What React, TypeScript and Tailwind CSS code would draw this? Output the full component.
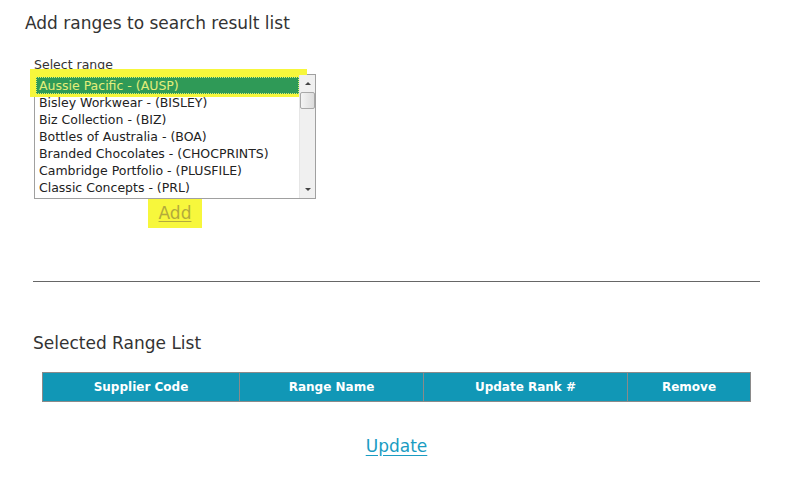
import React from "react";

const items = [
  "Aussie Pacific - (AUSP)",
  "Bisley Workwear - (BISLEY)",
  "Biz Collection - (BIZ)",
  "Bottles of Australia - (BOA)",
  "Branded Chocolates - (CHOCPRINTS)",
  "Cambridge Portfolio - (PLUSFILE)",
  "Classic Concepts - (PRL)",
];

const font = { fontFamily: '"DejaVu Sans", "Liberation Sans", sans-serif' };

export default function App() {
  return (
    <div className="w-[790px] h-[492px] bg-white text-[#333]" style={font}>
      <div className="pl-[25px] pt-[12px] text-[17px] leading-[22px] text-[#333]">
        Add ranges to search result list
      </div>
      <div className="ml-[34px] mt-[24px] w-[282px] flex flex-col">
        <div className="text-[12.5px] leading-[14px] text-[#333]">Select range</div>
        <div className="relative mt-[2px] h-[125px] w-[282px] border border-[#a0a0a0] bg-white flex">
          <div className="absolute left-[-5px] top-[-6px] w-[277px] h-[28px] bg-[#f7f73c]" />
          <div className="relative flex-1 pt-[2px] pl-[1px] overflow-hidden">
            {items.map((t, i) => (
              <div
                key={t}
                className={
                  i === 0
                    ? "h-[17px] leading-[16px] pl-[2px] text-[12.5px] bg-[#2f9a57] text-[#e4ee7a] border border-dotted border-[#d8ef70] whitespace-nowrap"
                    : "h-[17px] leading-[17px] pl-[3px] text-[12.5px] text-[#222] whitespace-nowrap"
                }
              >
                {t}
              </div>
            ))}
          </div>
          <div className="relative w-[16px] h-full bg-[#f0f0f0] border-l border-[#e6e6e6] flex flex-col items-center">
            <div className="h-[17px] w-full flex items-center justify-center">
              <div className="w-0 h-0 border-l-[3px] border-r-[3px] border-b-[3px] border-l-transparent border-r-transparent border-b-[#444]" />
            </div>
            <div className="w-[15px] h-[17px] rounded-[2px] border border-[#a8a8a8] bg-gradient-to-r from-[#f4f4f4] to-[#dcdcdc]" />
            <div className="flex-1" />
            <div className="h-[17px] w-full flex items-center justify-center">
              <div className="w-0 h-0 border-l-[3px] border-r-[3px] border-t-[3px] border-l-transparent border-r-transparent border-t-[#444]" />
            </div>
          </div>
        </div>
        <div className="flex justify-center">
          <div className="bg-[#f7f73c] w-[54px] h-[31px] mt-[-2px] flex items-center justify-center">
            <span className="text-[17px] leading-[20px] text-[#b3ab3b] underline underline-offset-[2px]">Add</span>
          </div>
        </div>
      </div>
      <div className="ml-[33px] mt-[53px] w-[727px] h-px bg-[#666]" />
      <div className="pl-[33px] mt-[50px] text-[17px] leading-[22px] text-[#333]">Selected Range List</div>
      <div className="ml-[42px] mt-[18px] w-[709px] h-[30px] bg-[#1197b6] border border-[#8a8a8a] flex text-white text-[12px] font-bold">
        <div className="w-[197px] flex items-center justify-center border-r border-[#8a8a8a]">Supplier Code</div>
        <div className="w-[184px] flex items-center justify-center border-r border-[#8a8a8a]">Range Name</div>
        <div className="w-[204px] flex items-center justify-center border-r border-[#8a8a8a]">Update Rank #</div>
        <div className="flex-1 flex items-center justify-center">Remove</div>
      </div>
      <div className="flex justify-center mt-[33px]">
        <span className="text-[17px] leading-[22px] text-[#1a9cc2] underline underline-offset-[3px] ml-[3px]">Update</span>
      </div>
    </div>
  );
}
